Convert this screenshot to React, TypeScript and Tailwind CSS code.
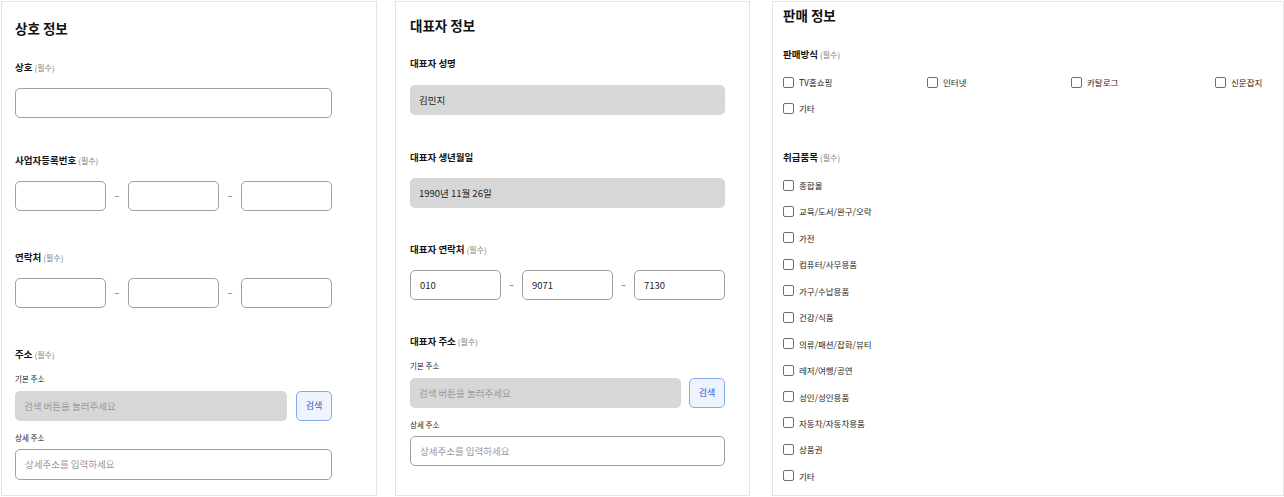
import React from "react";

const font = { fontFamily: '"Noto Sans CJK KR", "Noto Sans", sans-serif' };

function Label({ text, req, className = "" }: { text: string; req?: boolean; className?: string }) {
  return (
    <div className={`h-[14px] leading-[14px] text-[9.5px] font-bold text-[#141414] ${className}`}>
      {text}
      {req && <span className="ml-[2px] text-[8px] font-normal text-[#7a7a7a]">(필수)</span>}
    </div>
  );
}

function SubLabel({ text, className = "" }: { text: string; className?: string }) {
  return <div className={`h-[12px] leading-[12px] text-[7.5px] text-[#222] ${className}`}>{text}</div>;
}

function Box({ w, value, gray, placeholder, className = "" }: { w: string; value?: string; gray?: boolean; placeholder?: string; className?: string }) {
  return (
    <div
      className={`${w} h-[30px] rounded-[5px] flex items-center pl-[9px] text-[9.5px] ${
        gray ? "bg-[#d7d7d7]" : "bg-white border border-[#a0a0a0]"
      } ${className}`}
    >
      {value ? <span className="text-[#222]">{value}</span> : placeholder ? <span className="text-[#999]">{placeholder}</span> : null}
    </div>
  );
}

function Triple({ vals, gapCls, className = "" }: { vals?: string[]; gapCls: string; className?: string }) {
  const v = vals || ["", "", ""];
  return (
    <div className={`flex items-center ${className}`}>
      <Box w="w-[91px]" value={v[0]} />
      <div className={`${gapCls} text-center text-[9px] text-[#555]`}>–</div>
      <Box w="w-[91px]" value={v[1]} />
      <div className={`${gapCls} text-center text-[9px] text-[#555]`}>–</div>
      <Box w="w-[91px]" value={v[2]} />
    </div>
  );
}

function Search({ className = "" }: { className?: string }) {
  return (
    <div
      className={`w-[36px] h-[30px] rounded-[5px] border border-[#85a9e6] bg-[#eef3fd] flex items-center justify-center text-[9px] text-[#3a63be] ${className}`}
    >
      검색
    </div>
  );
}

function Check({ text }: { text: string }) {
  return (
    <div className="flex items-center h-[14px]">
      <div className="w-[11px] h-[11px] rounded-[2px] border border-[#6e6e6e] bg-white" />
      <span className="ml-[5px] text-[8.5px] text-[#1e1e1e] leading-[14px]">{text}</span>
    </div>
  );
}

export default function App() {
  const items = [
    "종합몰",
    "교육/도서/완구/오락",
    "가전",
    "컴퓨터/사무용품",
    "가구/수납용품",
    "건강/식품",
    "의류/패션/잡화/뷰티",
    "레저/여행/공연",
    "성인/성인용품",
    "자동차/자동차용품",
    "상품권",
    "기타",
  ];
  return (
    <div className="w-[1284px] h-[497px] bg-white overflow-hidden flex items-start pt-[1px] pl-[1px]" style={font}>
      {/* Panel 1 */}
      <div className="w-[376px] h-[495px] border border-[#e4e4e4] pt-[17px] pl-[13px] flex flex-col shrink-0">
        <div className="h-[18px] leading-[18px] text-[13.5px] font-bold text-[#111]">상호 정보</div>
        <Label text="상호" req className="mt-[23px]" />
        <Box w="w-[317px]" className="mt-[14px]" />
        <Label text="사업자등록번호" req className="mt-[35px]" />
        <Triple gapCls="w-[22px]" className="mt-[14px]" />
        <Label text="연락처" req className="mt-[39px]" />
        <Triple gapCls="w-[22px]" className="mt-[14px]" />
        <Label text="주소" req className="mt-[39px]" />
        <SubLabel text="기본 주소" className="mt-[12px]" />
        <div className="flex mt-[6px]">
          <Box w="w-[272px]" gray placeholder="검색 버튼을 눌러주세요" />
          <Search className="ml-[9px]" />
        </div>
        <SubLabel text="상세 주소" className="mt-[11px]" />
        <Box w="w-[317px]" className="mt-[5px] h-[31px]" placeholder="상세주소를 입력하세요" />
      </div>

      {/* Panel 2 */}
      <div className="ml-[18px] w-[355px] h-[495px] border border-[#e4e4e4] pt-[14px] pl-[14px] flex flex-col shrink-0">
        <div className="h-[18px] leading-[18px] text-[13.5px] font-bold text-[#111]">대표자 정보</div>
        <Label text="대표자 성명" className="mt-[22px]" />
        <Box w="w-[315px]" gray value="김민지" className="mt-[15px]" />
        <Label text="대표자 생년월일" className="mt-[35px]" />
        <Box w="w-[315px]" gray value="1990년 11월 26일" className="mt-[14px]" />
        <Label text="대표자 연락처" req className="mt-[34px]" />
        <Triple gapCls="w-[21px]" vals={["010", "9071", "7130"]} className="mt-[14px]" />
        <Label text="대표자 주소" req className="mt-[34px]" />
        <SubLabel text="기본 주소" className="mt-[12px]" />
        <div className="flex mt-[6px]">
          <Box w="w-[271px]" gray placeholder="검색 버튼을 눌러주세요" />
          <Search className="ml-[8px]" />
        </div>
        <SubLabel text="상세 주소" className="mt-[11px]" />
        <Box w="w-[315px]" className="mt-[5px]" placeholder="상세주소를 입력하세요" />
      </div>

      {/* Panel 3 */}
      <div className="ml-[22px] w-[512px] h-[495px] border border-[#e4e4e4] pt-[4px] pl-[10px] flex flex-col shrink-0 overflow-hidden">
        <div className="h-[18px] leading-[18px] text-[13.5px] font-bold text-[#111]">판매 정보</div>
        <Label text="판매방식" req className="mt-[23px]" />
        <div className="mt-[14px] grid grid-cols-[144px_144px_144px_auto] gap-y-[12px]">
          <Check text="TV홈쇼핑" />
          <Check text="인터넷" />
          <Check text="카탈로그" />
          <Check text="신문잡지" />
          <Check text="기타" />
        </div>
        <Label text="취급품목" req className="mt-[35px]" />
        <div className="mt-[14px] flex flex-col gap-y-[12.45px]">
          {items.map((t) => (
            <Check key={t} text={t} />
          ))}
        </div>
      </div>
    </div>
  );
}
